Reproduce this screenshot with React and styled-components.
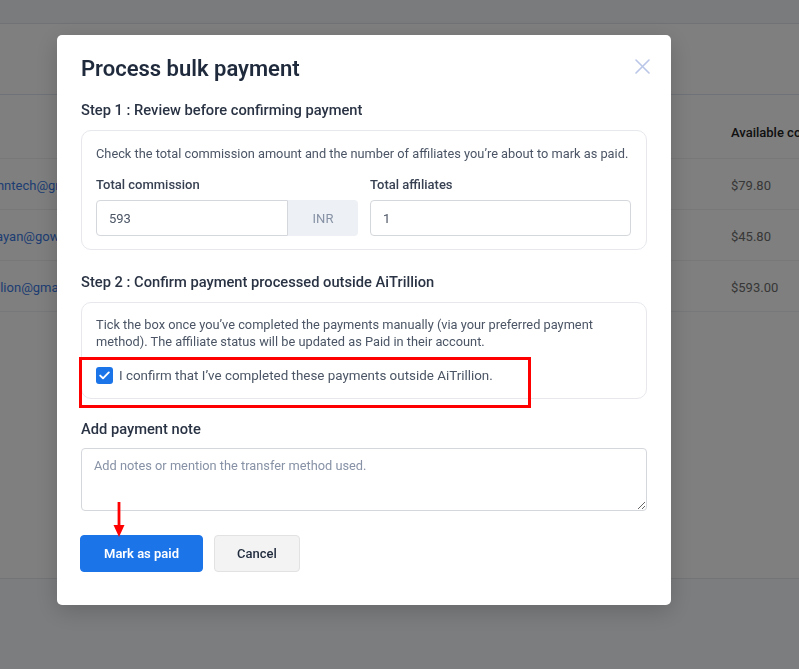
import React, { useState } from "react";
import styled, { createGlobalStyle } from "styled-components";

const GlobalStyle = createGlobalStyle`
  html, body {
    margin: 0;
    padding: 0;
    width: 799px;
    height: 669px;
    overflow: hidden;
    font-family: Roboto, "Liberation Sans", Arial, sans-serif;
    background: #f8fafd;
  }
  * { box-sizing: border-box; }
`;

/* ---------- page behind the modal ---------- */

const Page = styled.div`
  width: 799px;
  height: 669px;
  display: flex;
  flex-direction: column;
  background: #f8fafd;
  overflow: hidden;
`;

const TopBar = styled.div`
  height: 24px;
  background: #f4f6fb;
  border-bottom: 1px solid #e2e5ea;
`;

const Toolbar = styled.div`
  height: 71px;
  background: #ffffff;
  border-bottom: 1px solid #dfe5f0;
`;

const Table = styled.div`
  width: 1000px;
  height: 484px;
  background: #ffffff;
  border-bottom: 1px solid #e6e8ec;
  margin-left: -25px;
  flex-shrink: 0;
`;

const Row = styled.div`
  display: grid;
  grid-template-columns: 756px 1fr;
  align-items: center;
  height: ${(p) => (p.$head ? "64px" : "51px")};
  padding-top: ${(p) => (p.$head ? "11px" : "2px")};
  border-bottom: 1px solid #eef0f3;
  font-size: 13px;
`;

const Email = styled.span`
  color: #3b7be6;
  white-space: nowrap;
`;

const HeadCell = styled.span`
  grid-column: 2;
  color: #222222;
  font-weight: 500;
  white-space: nowrap;
`;

const Amount = styled.span`
  grid-column: 2;
  color: #6e6e6e;
  white-space: nowrap;
`;

/* ---------- modal ---------- */

const Overlay = styled.div`
  position: fixed;
  inset: 0;
  background: rgba(0, 0, 0, 0.5);
  padding: 35px 0 0 57px;
`;

const Modal = styled.div`
  position: relative;
  width: 614px;
  height: 570px;
  background: #ffffff;
  border-radius: 5px;
  box-shadow: 0 6px 24px rgba(0, 0, 0, 0.18);
  padding: 20px 24px 33px 24px;
  display: flex;
  flex-direction: column;
`;

const Title = styled.h2`
  margin: 0;
  font-size: 22px;
  line-height: 28px;
  font-weight: 600;
  color: #1f2a3c;
`;

const CloseButton = styled.button`
  position: absolute;
  top: 22px;
  right: 20px;
  width: 18px;
  height: 18px;
  padding: 0;
  border: 0;
  background: transparent;
  cursor: pointer;
  display: flex;
  align-items: center;
  justify-content: center;
`;

const StepHeading = styled.h3`
  margin: ${(p) => p.$top || "17px"} 0 10px 0;
  font-size: 14.7px;
  line-height: 20px;
  font-weight: 500;
  color: #2a3344;
`;

const Card = styled.div`
  position: relative;
  border: 1px solid #e6e8ec;
  border-radius: 10px;
  padding: ${(p) => p.$pad || "14px 15px 13px 14px"};
`;

const Description = styled.p`
  margin: 0;
  font-size: 12.8px;
  line-height: 17px;
  color: #4b5565;
  white-space: ${(p) => (p.$nowrap ? "nowrap" : "normal")};
`;

const Fields = styled.div`
  display: grid;
  grid-template-columns: 1fr 1fr;
  gap: 12px;
  margin-top: 14px;
`;

const Field = styled.div`
  display: flex;
  flex-direction: column;
`;

const Label = styled.label`
  font-size: 13px;
  line-height: 18px;
  font-weight: 500;
  color: #384152;
  margin-bottom: 6px;
`;

const InputGroup = styled.div`
  display: flex;
  height: 36px;
`;

const Input = styled.input`
  flex: 1;
  min-width: 0;
  height: 36px;
  border: 1px solid #d4d7dc;
  border-radius: ${(p) => (p.$addon ? "4px 0 0 4px" : "4px")};
  padding: 0 12px;
  font-family: inherit;
  font-size: 13px;
  color: #4b5565;
  outline: none;
`;

const Addon = styled.span`
  width: 70px;
  display: flex;
  align-items: center;
  justify-content: center;
  background: #edf0f4;
  border-radius: 0 4px 4px 0;
  font-size: 13px;
  color: #8792a6;
`;

const CheckRow = styled.label`
  display: flex;
  align-items: center;
  gap: 6px;
  margin-top: 17px;
  font-size: 13.4px;
  color: #4b5565;
  cursor: pointer;
`;

const Box = styled.span`
  width: 17px;
  height: 17px;
  border-radius: 3px;
  background: ${(p) => (p.$checked ? "#1b74e8" : "#ffffff")};
  border: ${(p) => (p.$checked ? "none" : "1px solid #c3c8d0")};
  display: flex;
  align-items: center;
  justify-content: center;
  flex-shrink: 0;
`;

const Highlight = styled.div`
  position: absolute;
  left: -3px;
  top: 54px;
  width: 452px;
  height: 51px;
  border: 3px solid #ff0000;
  pointer-events: none;
`;

const NoteHeading = styled.h3`
  margin: 20px 0 9px 0;
  font-size: 14.7px;
  line-height: 20px;
  font-weight: 500;
  color: #2a3344;
`;

const TextArea = styled.textarea`
  height: 63px;
  border: 1px solid #d4d7dc;
  border-radius: 4px;
  padding: 9px 12px;
  font-family: inherit;
  font-size: 12.8px;
  color: #4b5565;
  resize: vertical;
  outline: none;
  &::placeholder {
    color: #8792a6;
  }
`;

const Actions = styled.div`
  position: relative;
  display: flex;
  gap: 11px;
  margin-top: 24px;
  margin-left: -1px;
`;

const Button = styled.button`
  height: 37px;
  padding: 0 ${(p) => (p.$primary ? "23px" : "22px")};
  border-radius: 4px;
  border: 1px solid ${(p) => (p.$primary ? "#1b74e8" : "#e2e2e2")};
  background: ${(p) => (p.$primary ? "#1b74e8" : "#f3f3f3")};
  color: ${(p) => (p.$primary ? "#ffffff" : "#1f2a3c")};
  font-family: inherit;
  font-size: 13px;
  font-weight: ${(p) => (p.$primary ? 600 : 500)};
  cursor: pointer;
`;

const Arrow = styled.svg`
  position: absolute;
  left: 33px;
  top: -33px;
  pointer-events: none;
`;

const rows = [
  { email: "mjohntech@gmail.com", amount: "$79.80" },
  { email: "sunayan@gowebs.com", amount: "$45.80" },
  { email: "aitrillion@gmail.com", amount: "$593.00" },
];

export default function App() {
  const [confirmed, setConfirmed] = useState(true);
  const [note, setNote] = useState("");

  return (
    <>
      <GlobalStyle />
      <Page>
        <TopBar />
        <Toolbar />
        <Table>
          <Row $head>
            <span />
            <HeadCell>Available commission</HeadCell>
          </Row>
          {rows.map((r) => (
            <Row key={r.email}>
              <Email>{r.email}</Email>
              <Amount>{r.amount}</Amount>
            </Row>
          ))}
        </Table>
      </Page>

      <Overlay>
        <Modal>
          <Title>Process bulk payment</Title>
          <CloseButton aria-label="Close">
            <svg width="15" height="15" viewBox="0 0 15 15">
              <path
                d="M1 1 L14 14 M14 1 L1 14"
                stroke="#b9c6e8"
                strokeWidth="1.6"
                strokeLinecap="round"
              />
            </svg>
          </CloseButton>

          <StepHeading>Step 1 : Review before confirming payment</StepHeading>
          <Card>
            <Description $nowrap>
              Check the total commission amount and the number of affiliates
              you’re about to mark as paid.
            </Description>
            <Fields>
              <Field>
                <Label>Total commission</Label>
                <InputGroup>
                  <Input $addon defaultValue="593" />
                  <Addon>INR</Addon>
                </InputGroup>
              </Field>
              <Field>
                <Label>Total affiliates</Label>
                <InputGroup>
                  <Input defaultValue="1" />
                </InputGroup>
              </Field>
            </Fields>
          </Card>

          <StepHeading $top="22px">
            Step 2 : Confirm payment processed outside AiTrillion
          </StepHeading>
          <Card $pad="13px 15px 14px 14px">
            <Description>
              Tick the box once you’ve completed the payments manually (via
              your preferred payment method). The affiliate status will be
              updated as Paid in their account.
            </Description>
            <CheckRow onClick={() => setConfirmed(!confirmed)}>
              <Box $checked={confirmed}>
                {confirmed && (
                  <svg width="11" height="9" viewBox="0 0 11 9">
                    <path
                      d="M1.2 4.6 L4 7.3 L9.8 1.4"
                      fill="none"
                      stroke="#ffffff"
                      strokeWidth="1.9"
                      strokeLinecap="round"
                      strokeLinejoin="round"
                    />
                  </svg>
                )}
              </Box>
              I confirm that I’ve completed these payments outside AiTrillion.
            </CheckRow>
            <Highlight />
          </Card>

          <NoteHeading>Add payment note</NoteHeading>
          <TextArea
            value={note}
            onChange={(e) => setNote(e.target.value)}
            placeholder="Add notes or mention the transfer method used."
          />

          <Actions>
            <Button $primary>Mark as paid</Button>
            <Button>Cancel</Button>
            <Arrow width="12" height="36" viewBox="0 0 12 36">
              <line x1="6" y1="0" x2="6" y2="25" stroke="#ff0000" strokeWidth="2.8" />
              <polygon points="0.5,23 11.5,23 6,35" fill="#ff0000" />
            </Arrow>
          </Actions>
        </Modal>
      </Overlay>
    </>
  );
}
